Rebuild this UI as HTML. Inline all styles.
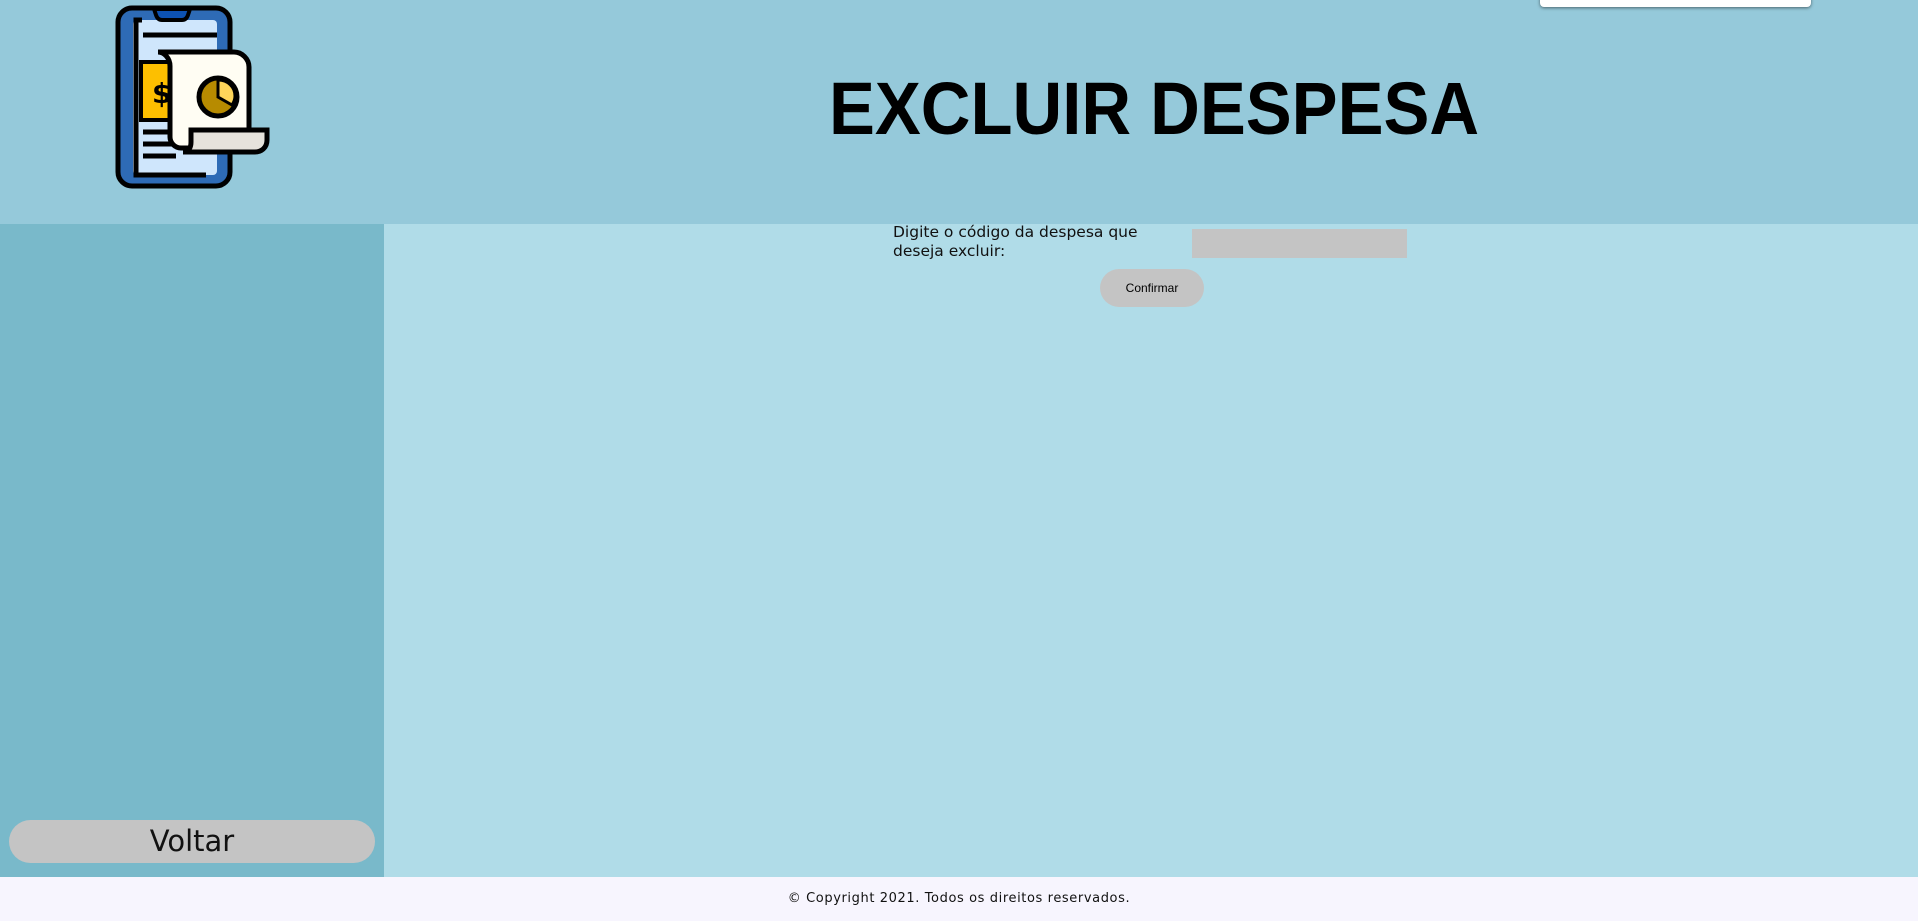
<!DOCTYPE html>
<html><head><meta charset="utf-8"><style>
*{margin:0;padding:0;box-sizing:border-box}
body{width:1918px;height:921px;overflow:hidden;position:relative;background:#b0dce8;font-family:"DejaVu Sans","Liberation Sans",sans-serif}
#hdr{position:absolute;left:0;top:0;width:1918px;height:224px;background:#95c9da}
#side{position:absolute;left:0;top:224px;width:384px;height:653px;background:#79b9ca}
#main{position:absolute;left:384px;top:224px;width:1534px;height:653px;background:#b0dce8}
#foot{position:absolute;left:0;top:877px;width:1918px;height:44px;background:#f7f5fe;text-align:center;font-size:13px;letter-spacing:0.6px;line-height:44px;color:#111}
#title{position:absolute;left:829px;top:72px;width:760px;font-family:"Liberation Sans",sans-serif;font-weight:bold;font-size:74px;line-height:74px;white-space:nowrap;transform:scaleX(0.93);transform-origin:0 0;color:#000}
#lbl{position:absolute;left:893px;top:223px;font-size:15.5px;line-height:19px;color:#111}
#inp{position:absolute;left:1192px;top:229px;width:215px;height:29px;background:#c4c4c4}
#btn{position:absolute;left:1100px;top:269px;width:104px;height:38px;border-radius:19px;background:#c4c4c4;font-family:"Liberation Sans",sans-serif;font-size:12px;line-height:38px;text-align:center;color:#000}
#volt{position:absolute;left:9px;top:820px;width:366px;height:43px;border-radius:22px;background:#c4c4c4;text-align:center;font-size:29px;line-height:43px;color:#111}
#pop{position:absolute;left:1540px;top:-6px;width:271px;height:13px;background:#fff;border-radius:4px;box-shadow:0 1px 3px rgba(0,0,0,.5)}
</style></head><body>
<div id="hdr"></div>
<div id="pop"></div>
<svg style="position:absolute;left:0;top:0" width="300" height="224" viewBox="0 0 300 224">
<rect x="118" y="8" width="112" height="178" rx="14" fill="#2e6bb6" stroke="#000" stroke-width="5"/>
<rect x="133" y="20" width="84" height="155" rx="4" fill="#cfe6fc"/>
<path d="M154 9h36l-2 6c-1 3-3 5-6 5h-20c-3 0-5-2-6-5z" fill="#0d52b2" stroke="#000" stroke-width="4"/>
<path d="M142 20h-6v155h70" fill="none" stroke="#000" stroke-width="5"/>
<path d="M143 35h74 M143 132h33 M143 144h33 M143 156h33" stroke="#000" stroke-width="5"/>
<rect x="141" y="62" width="40" height="58" fill="#fdbf00" stroke="#000" stroke-width="4"/>
<text x="152" y="103" font-family="DejaVu Sans" font-weight="bold" font-size="28" fill="#000">$</text>
<path d="M170 52h64c8 0 15 7 15 15v65h-58v16h-10c-6 0-11-5-11-11V66c0-8-6-14-12-14z" fill="#fffdf3" stroke="#000" stroke-width="5"/>
<path d="M191 130h76v10c0 8-6 12-12 12h-72c6 0 8-5 8-10z" fill="#e6e3dc" stroke="#000" stroke-width="5"/>
<circle cx="218" cy="97" r="19" fill="#b78b00" stroke="#000" stroke-width="5"/>
<path d="M218 80v17l14 8c2-3 3-6 3-9 0-9-7-16-17-16z" fill="#fed55a" stroke="#000" stroke-width="3"/>
</svg>
<div id="title">EXCLUIR DESPESA</div>
<div id="side"></div>
<div id="main"></div>
<div id="lbl">Digite o código da despesa que<br>deseja excluir:</div>
<div id="inp"></div>
<div id="btn">Confirmar</div>
<div id="volt">Voltar</div>
<div id="foot">© Copyright 2021. Todos os direitos reservados.</div>
</body></html>
